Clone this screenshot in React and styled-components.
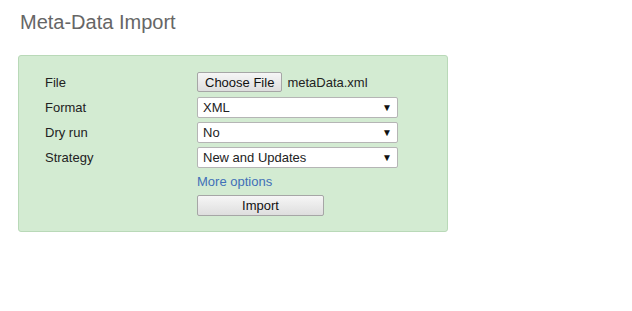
import React from 'react';
import styled, { createGlobalStyle } from 'styled-components';

const GlobalStyle = createGlobalStyle`
  body {
    margin: 0;
    background: #fff;
    font-family: "Liberation Sans", Arial, sans-serif;
    font-size: 13px;
    color: #222;
  }
`;

const Page = styled.div`
  padding: 10px 18px;
`;

const Title = styled.h1`
  margin: 0 0 21px 2px;
  font-size: 20px;
  font-weight: normal;
  color: #666;
  line-height: 24px;
`;

const Panel = styled.div`
  width: 402px;
  background: #d3ebd2;
  border: 1px solid #b9d9b8;
  border-radius: 3px;
  padding: 16px 0 15px 26px;
  display: grid;
  grid-template-columns: 151px 202px;
  row-gap: 4px;
  align-items: center;
`;

const Label = styled.div`
  color: #222;
  line-height: 21px;
`;

const FileField = styled.div`
  display: flex;
  align-items: center;
  gap: 5px;
  margin-bottom: 1px;
`;

const Button = styled.button`
  font-family: inherit;
  font-size: 13px;
  color: #111;
  height: ${p => (p.$wide ? '21px' : '20px')};
  width: ${p => (p.$wide ? '127px' : 'auto')};
  padding: 0 7px;
  margin: 0 0 0 1px;
  border: 1px solid #a6a6a6;
  border-radius: 2px;
  background: linear-gradient(#f6f6f6, #dedede);
`;

const Select = styled.div`
  height: 21px;
  box-sizing: border-box;
  border: 1px solid #b5b5b5;
  border-radius: 2px;
  background: #fff;
  display: flex;
  align-items: center;
  justify-content: space-between;
  padding: 0 5px 0 5px;
  margin-left: 1px;
  color: #222;
`;

const Arrow = styled.span`
  font-size: 10px;
  color: #111;
`;

const Link = styled.a`
  color: #4170b8;
  text-decoration: none;
  line-height: 18px;
  margin: 1px 0 0 1px;
`;

const Spacer = styled.div``;

const Field = ({ label, value }) => (
  <>
    <Label>{label}</Label>
    <Select>
      <span>{value}</span>
      <Arrow>▼</Arrow>
    </Select>
  </>
);

export default function App() {
  return (
    <>
      <GlobalStyle />
      <Page>
        <Title>Meta-Data Import</Title>
        <Panel>
          <Label>File</Label>
          <FileField>
            <Button type="button">Choose File</Button>
            <span>metaData.xml</span>
          </FileField>
          <Field label="Format" value="XML" />
          <Field label="Dry run" value="No" />
          <Field label="Strategy" value="New and Updates" />
          <Spacer />
          <Link href="#">More options</Link>
          <Spacer />
          <Button type="button" $wide>Import</Button>
        </Panel>
      </Page>
    </>
  );
}
